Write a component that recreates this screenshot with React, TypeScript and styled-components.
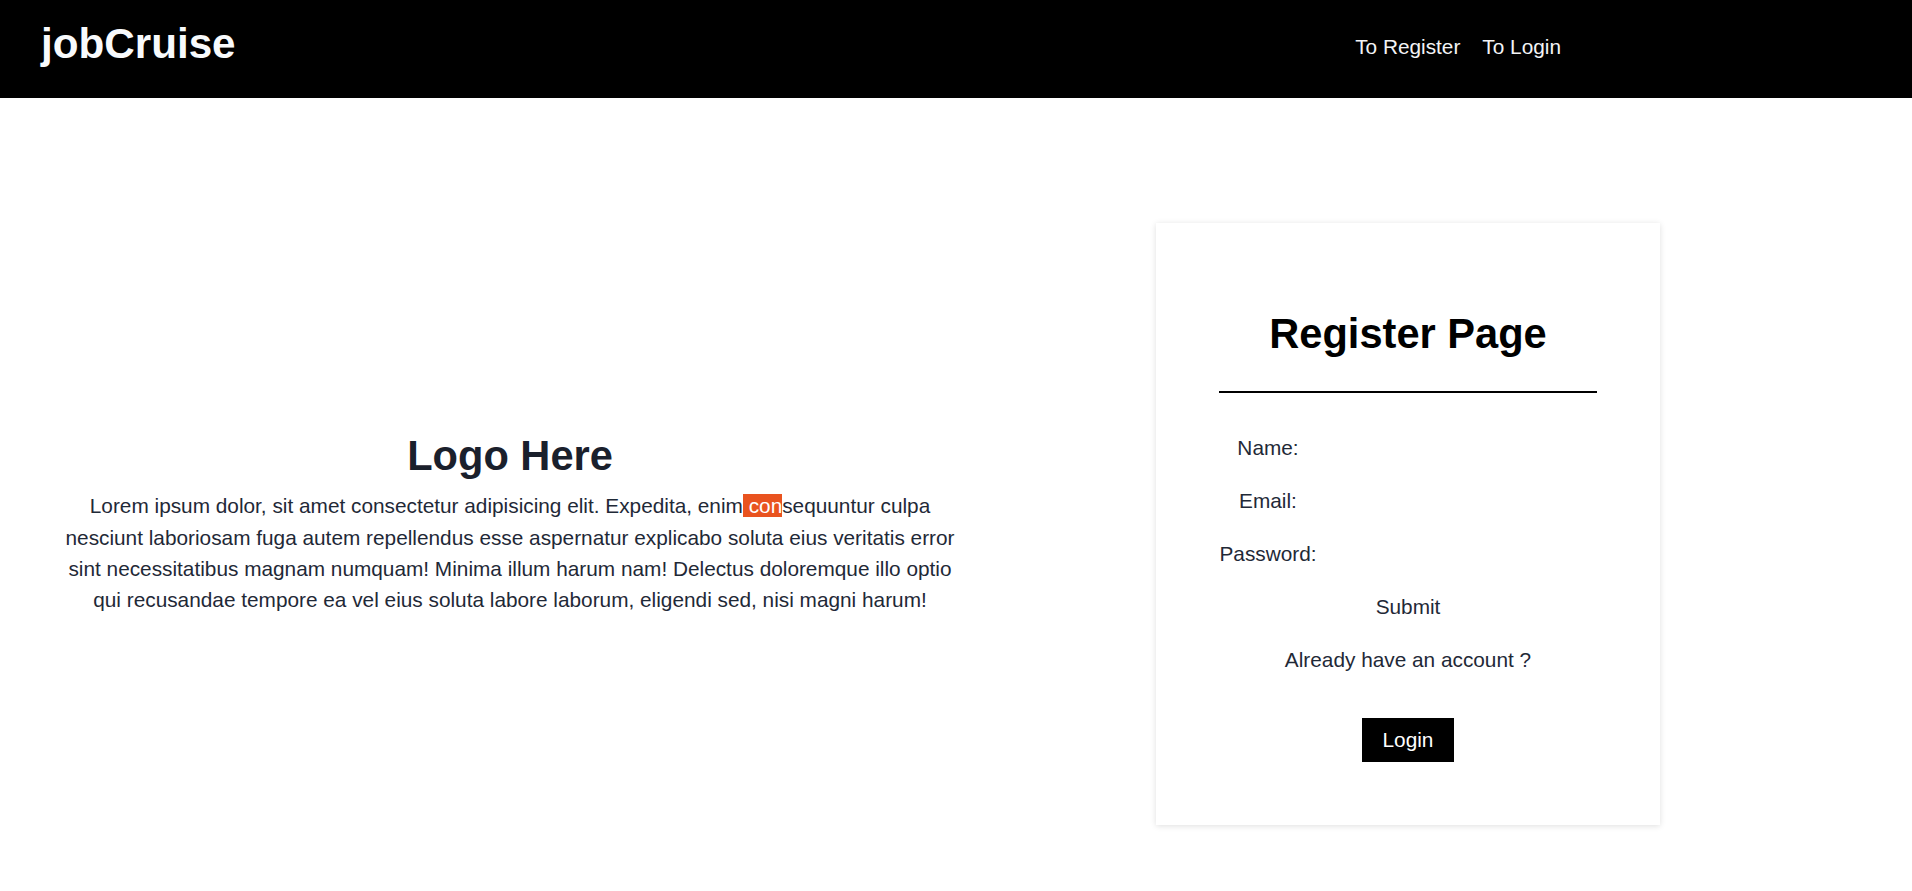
import React from "react";
import styled, { createGlobalStyle } from "styled-components";

const GlobalStyle = createGlobalStyle`
  * { box-sizing: border-box; }
  html, body { margin: 0; padding: 0; background: #ffffff; }
  body {
    font-family: "Liberation Sans", Arial, Helvetica, sans-serif;
    color: #1f2937;
  }
`;

const Header = styled.header`
  height: 98px;
  background: #000000;
  display: flex;
  align-items: flex-start;
  justify-content: space-between;
  padding: 0 351px 0 41px;
`;

const Brand = styled.h1`
  margin: 20px 0 0;
  font-size: 42.2px;
  line-height: 48px;
  font-weight: 700;
  color: #f8fafc;
`;

const Nav = styled.nav`
  display: flex;
  gap: 22px;
  margin-top: 35px;
`;

const NavLink = styled.a`
  font-size: 20.8px;
  line-height: 24px;
  color: #f3f4f6;
  text-decoration: none;
  cursor: pointer;
`;

const Main = styled.main`
  display: flex;
  align-items: center;
  justify-content: space-between;
  padding: 125px 252px 60px 56px;
`;

const Intro = styled.section`
  width: 908px;
  text-align: center;
`;

const IntroTitle = styled.h2`
  margin: 0 0 10px;
  font-size: 41.6px;
  line-height: 48px;
  font-weight: 700;
  color: #1a202c;
`;

const IntroText = styled.p`
  margin: 0;
  font-size: 20.8px;
  line-height: 31.4px;
  color: #1f2937;
`;

const Mark = styled.span`
  background: #e9531f;
  color: #ffffff;
`;

const Card = styled.div`
  width: 504px;
  padding: 87px 63px 63px;
  background: #ffffff;
  box-shadow: 0 1px 6px rgba(0, 0, 0, 0.13);
  display: flex;
  flex-direction: column;
`;

const CardTitle = styled.h2`
  margin: 0;
  font-size: 41.6px;
  line-height: 48px;
  font-weight: 700;
  color: #000000;
  text-align: center;
`;

const Divider = styled.hr`
  margin: 33px 0 39px;
  border: none;
  height: 2px;
  background: #000000;
`;

const Form = styled.form`
  display: flex;
  flex-direction: column;
  gap: 21px;
`;

const FormRow = styled.div`
  display: grid;
  grid-template-columns: 98px 1fr;
  align-items: center;
  height: 32px;
`;

const Label = styled.label`
  font-size: 20.8px;
  line-height: 32px;
  text-align: center;
  color: #1f2937;
`;

const Input = styled.input`
  height: 32px;
  border: none;
  outline: none;
  background: transparent;
  font-family: inherit;
  font-size: 18px;
  padding: 0 8px;
`;

const TextButton = styled.button`
  align-self: center;
  height: 32px;
  padding: 0;
  border: none;
  background: transparent;
  font-family: inherit;
  font-size: 20.8px;
  line-height: 32px;
  color: #1f2937;
  cursor: pointer;
`;

const Prompt = styled.p`
  margin: 0;
  font-size: 20.8px;
  line-height: 32px;
  text-align: center;
  color: #1f2937;
`;

const LoginButton = styled.button`
  align-self: center;
  margin-top: 21px;
  height: 44px;
  padding: 0 21px;
  border: none;
  background: #000000;
  color: #ffffff;
  font-family: inherit;
  font-size: 20.8px;
  cursor: pointer;
`;

export default function App() {
  return (
    <>
      <GlobalStyle />
      <Header>
        <Brand>jobCruise</Brand>
        <Nav>
          <NavLink>To Register</NavLink>
          <NavLink>To Login</NavLink>
        </Nav>
      </Header>
      <Main>
        <Intro>
          <IntroTitle>Logo Here</IntroTitle>
          <IntroText>
            Lorem ipsum dolor, sit amet consectetur adipisicing elit. Expedita, enim
            <Mark> con</Mark>sequuntur culpa nesciunt laboriosam fuga autem repellendus esse
            aspernatur explicabo soluta eius veritatis error sint necessitatibus magnam
            numquam! Minima illum harum nam! Delectus doloremque illo optio qui recusandae
            tempore ea vel eius soluta labore laborum, eligendi sed, nisi magni harum!
          </IntroText>
        </Intro>
        <Card>
          <CardTitle>Register Page</CardTitle>
          <Divider />
          <Form onSubmit={(e) => e.preventDefault()}>
            <FormRow>
              <Label htmlFor="name">Name:</Label>
              <Input id="name" type="text" />
            </FormRow>
            <FormRow>
              <Label htmlFor="email">Email:</Label>
              <Input id="email" type="email" />
            </FormRow>
            <FormRow>
              <Label htmlFor="password">Password:</Label>
              <Input id="password" type="password" />
            </FormRow>
            <TextButton type="submit">Submit</TextButton>
            <Prompt>Already have an account ?</Prompt>
            <LoginButton type="button">Login</LoginButton>
          </Form>
        </Card>
      </Main>
    </>
  );
}
